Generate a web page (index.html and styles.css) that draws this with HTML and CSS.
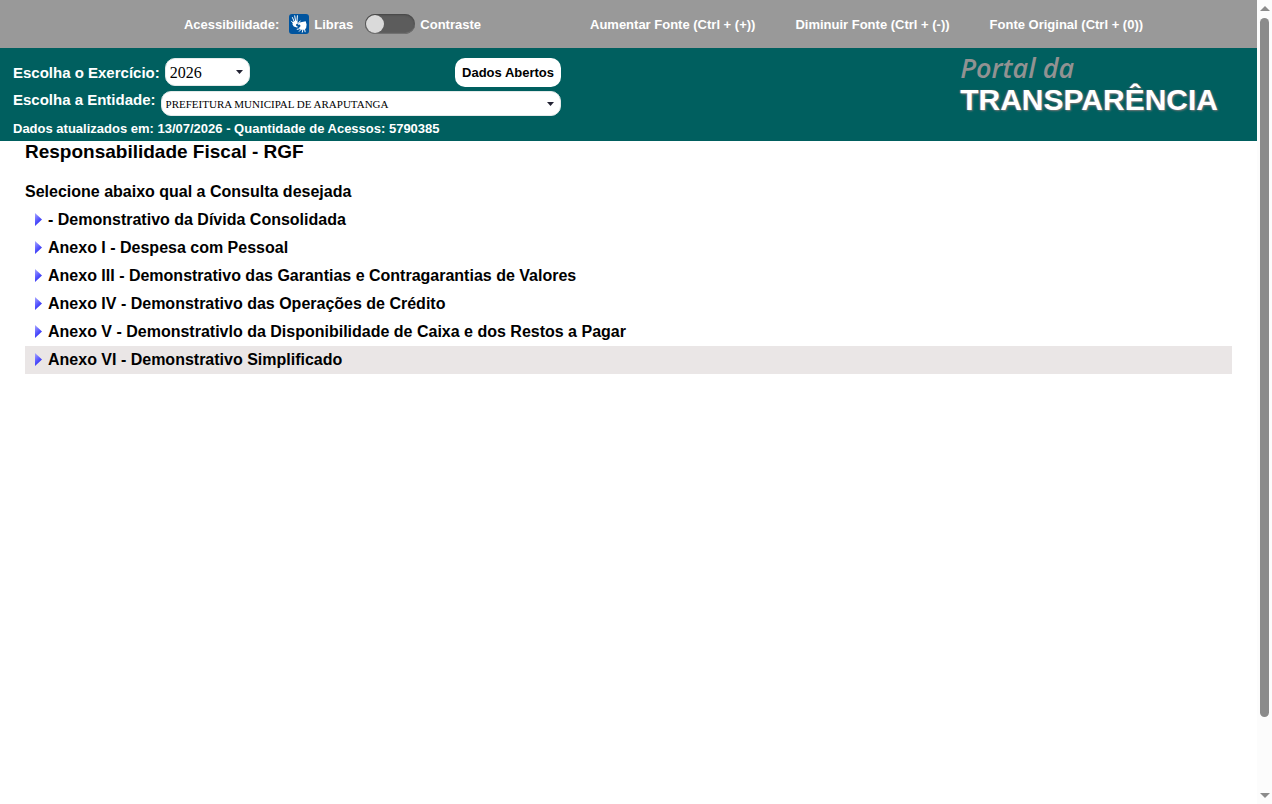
FILE: index.html
```html
<!DOCTYPE html>
<html lang="pt-BR">
<head>
<meta charset="utf-8">
<title>Portal da Transparência</title>
<link rel="stylesheet" href="styles.css">
</head>
<body>
<div class="page">
  <nav class="access">
    <div class="access-tools">
      <span>Acessibilidade:</span>
      <a class="libras" href="#">
        <svg width="20" height="20" viewBox="0 0 20 20" aria-hidden="true">
          <rect width="20" height="20" rx="3" fill="#00549f"/>
          <g fill="none" stroke="#fff" stroke-linecap="round" stroke-linejoin="round">
            <path stroke-width="1" d="M5.200 7.500 3.400 3.500M6.600 7 5.700 1.800M8 7l.4-5.300M4.300 9.200 2.500 7.200M8.800 9.800l2.400-2.800"/>
            <path stroke-width="1" d="m11.500 14.500-3.300.8M12.500 15l-2.200 2.300M14 15.200l-.7 3M15.500 14.800l.6 3"/>
          </g>
          <path fill="#fff" d="m3.800 8 3-1.500 1.700.8.2 2L7 10.500l.3 1.500 2 .9-1.500.6-3-1-1.300-1.900z"/>
          <path fill="#fff" d="m9.800 8.800 3.200-.9 3.700-.6.9 3.200-.5 3.700-2.100 1.500-3.600-.3-1.300-1.600 1.500-1.900-.8-1.400-1.800.6z"/>
        </svg>
        <span>Libras</span>
      </a>
      <label class="contrast"><input class="switch" type="checkbox"><span>Contraste</span></label>
    </div>
    <div class="font-links">
      <a href="#">Aumentar Fonte (Ctrl + (+))</a>
      <a href="#">Diminuir Fonte (Ctrl + (-))</a>
      <a href="#">Fonte Original (Ctrl + (0))</a>
    </div>
  </nav>
  <header class="header">
    <form class="filters">
      <div class="row">
        <label for="year" class="year-label">Escolha o Exercício:</label>
        <select id="year" class="select year"><option>2026</option></select>
        <button class="open-data" type="button">Dados Abertos</button>
      </div>
      <div class="row">
        <label for="entity">Escolha a Entidade:</label>
        <select id="entity" class="select entity"><option>PREFEITURA MUNICIPAL DE ARAPUTANGA</option></select>
      </div>
      <p class="updated">Dados atualizados em: 13/07/2026 - Quantidade de Acessos: 5790385</p>
    </form>
    <a class="brand" href="#">
      <span class="brand-top">Portal da</span>
      <span class="brand-name">TRANSPARÊNCIA</span>
    </a>
  </header>
  <main class="content">
    <h1 class="title">Responsabilidade Fiscal - RGF</h1>
    <h2 class="subtitle">Selecione abaixo qual a Consulta desejada</h2>
    <ul class="list">
      <li><a class="item" href="#">- Demonstrativo da Dívida Consolidada</a></li>
      <li><a class="item" href="#">Anexo I - Despesa com Pessoal</a></li>
      <li><a class="item" href="#">Anexo III - Demonstrativo das Garantias e Contragarantias de Valores</a></li>
      <li><a class="item" href="#">Anexo IV - Demonstrativo das Operações de Crédito</a></li>
      <li><a class="item" href="#">Anexo V - Demonstrativlo da Disponibilidade de Caixa e dos Restos a Pagar</a></li>
      <li><a class="item active" href="#">Anexo VI - Demonstrativo Simplificado</a></li>
    </ul>
  </main>
</div>
<div class="scrollbar" aria-hidden="true">
  <span class="arrow up"></span>
  <div class="track"><div class="thumb"></div></div>
  <span class="arrow down"></span>
</div>
</body>
</html>
```
FILE: styles.css
```css
* { box-sizing: border-box; }
body {
  margin: 0;
  display: flex;
  height: 100vh;
  overflow: hidden;
  font: bold 16px "Liberation Sans", Arial, sans-serif;
  color: #000;
  background: #fff;
}
a { color: inherit; text-decoration: none; }
.page { flex: 1; min-width: 0; }

.access {
  display: flex;
  align-items: center;
  justify-content: center;
  gap: 109px;
  height: 48px;
  padding-left: 70px;
  background: #999;
  color: #fff;
  font-size: 13px;
  white-space: nowrap;
}
.access-tools { display: flex; align-items: center; }
.libras { display: flex; align-items: center; gap: 5px; margin: 0 12px 0 10px; }
.contrast { display: flex; align-items: center; gap: 5px; }
.switch {
  appearance: none;
  display: flex;
  align-items: center;
  width: 50px;
  height: 20px;
  margin: 0;
  padding: 0 1px;
  border-radius: 10px;
  background: #5c5c5c;
  box-shadow: inset 0 1px 2px #444, inset 0 -1px 1px #777;
}
.switch::before {
  content: "";
  width: 18px;
  height: 18px;
  border-radius: 50%;
  background: #dadada;
}
.switch:checked { justify-content: flex-end; }
.font-links { display: flex; gap: 40px; }

.header {
  display: flex;
  justify-content: space-between;
  padding: 10px 39px 4px 13px;
  background: #005f5f;
  color: #fff;
}
.filters { width: 548px; font-size: 15px; }
.row { display: flex; align-items: flex-start; gap: 5px; margin-bottom: 4px; }
.row + .row { margin-bottom: 5px; }
.row label { line-height: 18px; }
.year-label { padding-top: 6px; }
.select {
  appearance: none;
  border: 1px solid #e4eaea;
  border-radius: 10px;
  padding: 0 4px;
  color: #000;
  background: #fff url("data:image/svg+xml,%3Csvg xmlns='http://www.w3.org/2000/svg' width='7' height='4'%3E%3Cpath d='M0 0h7L3.500 4z' fill='%23223'/%3E%3C/svg%3E") no-repeat right 6px center;
  font-family: "Liberation Serif", "Times New Roman", serif;
}
.year { width: 85px; height: 28px; font-size: 16px; }
.entity { flex: 1; min-width: 0; height: 25px; font-size: 11px; }
.open-data {
  margin-left: auto;
  height: 29px;
  padding: 0 7px;
  border: 0;
  border-radius: 10px;
  background: #fff;
  color: #000;
  font: bold 13px "Liberation Sans", Arial, sans-serif;
}
.updated { margin: 0; font-size: 13px; line-height: 16px; }
.brand { display: flex; flex-direction: column; }
.brand-top {
  color: #929292;
  font: italic 600 27px/20px "Open Sans", "Noto Sans", sans-serif;
}
.brand-name {
  font-size: 30px;
  line-height: 44px;
  text-shadow: 1px 1px 2px #777, -1px 0 1px #666;
}

.content { padding: 0 25px; }
.title { margin: 0 0 18px; font-size: 19px; line-height: 22px; }
.subtitle { margin: 0; font-size: 16px; line-height: 22px; }
.list { list-style: none; margin: 3px 0 0; padding: 0; }
.item { display: flex; align-items: center; gap: 6px; height: 28px; padding-left: 10px; }
.item::before {
  content: "";
  width: 7px;
  height: 13px;
  margin-bottom: 1px;
  background: linear-gradient(135deg, #aaf, #55f 50%, #11d);
  clip-path: polygon(0 0, 100% 50%, 0 100%);
}
.item:hover, .active { background: #eae6e6; }

.scrollbar {
  display: flex;
  flex-direction: column;
  align-items: center;
  width: 15px;
  padding: 6px 0;
  background: #fcfcfc;
}
.track { flex: 1; width: 9px; padding: 7px 0; }
.thumb { height: 91%; border-radius: 5px; background: #8b8b8b; }
.arrow { border: 5px solid transparent; }
.up { border-top: 0; border-bottom-color: #8b8b8b; }
.down { border-bottom: 0; border-top-color: #8b8b8b; }
```
